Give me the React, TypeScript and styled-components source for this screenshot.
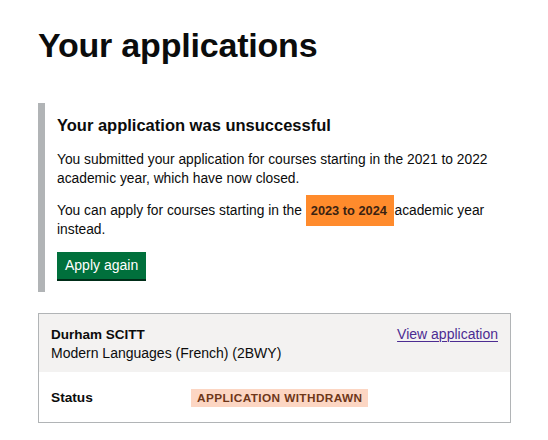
import React from "react";
import styled, { createGlobalStyle } from "styled-components";

const GlobalStyle = createGlobalStyle`
  html, body {
    margin: 0;
    padding: 0;
    background: #ffffff;
  }
  body {
    font-family: "Liberation Sans", Arial, sans-serif;
    color: #0b0c0c;
    -webkit-font-smoothing: antialiased;
  }
`;

const Page = styled.main`
  padding: 26px 37px 20px 38px;
  width: 473px;
`;

const PageHeading = styled.h1`
  margin: 0 0 39px;
  font-size: 34px;
  line-height: 38px;
  font-weight: 700;
  letter-spacing: -0.2px;
`;

const Inset = styled.div`
  border-left: 7px solid #b1b4b6;
  padding: 11px 12px 13px 12px;
  margin-bottom: 21px;
`;

const InsetHeading = styled.h2`
  margin: 0 0 13px;
  font-size: 16.5px;
  line-height: 22.5px;
  font-weight: 700;
`;

const Body = styled.p`
  margin: 0 0 13px;
  font-size: 13.8px;
  line-height: 19px;
`;

const Highlight = styled.mark`
  background: #ff8b2c;
  color: #3a2212;
  font-weight: 700;
  font-size: 12.8px;
  padding: 8px 4px 8px 5px;
`;

const Button = styled.button`
  display: inline-block;
  margin: 0;
  border: 0;
  border-radius: 0;
  background: #00703c;
  color: #ffffff;
  font-family: inherit;
  font-size: 14px;
  line-height: 19px;
  padding: 4px 8px 4px 8px;
  box-shadow: 0 2px 0 #002d18;
  cursor: pointer;
`;

const Card = styled.section`
  border: 1px solid #b1b4b6;
`;

const CardHeader = styled.div`
  background: #f3f2f1;
  padding: 11px 12px 9px;
  display: flex;
  justify-content: space-between;
  align-items: flex-start;
`;

const CardTitle = styled.div`
  font-size: 14px;
  line-height: 19px;
`;

const Provider = styled.div`
  font-weight: 700;
  font-size: 13.5px;
`;

const CardLink = styled.a`
  font-size: 14px;
  line-height: 19px;
  color: #4c2c92;
  text-decoration: underline;
  text-decoration-thickness: 1px;
  text-underline-offset: 2px;
`;

const SummaryRow = styled.dl`
  margin: 0;
  padding: 16px 12px 15px;
  display: grid;
  grid-template-columns: 140px 1fr;
  align-items: center;
`;

const Key = styled.dt`
  font-weight: 700;
  font-size: 13.7px;
  line-height: 19px;
`;

const Value = styled.dd`
  margin: 0;
  line-height: 19px;
`;

const Tag = styled.strong`
  display: inline-block;
  vertical-align: middle;
  background: #fcd6c3;
  color: #6e3619;
  font-weight: 700;
  font-size: 11.8px;
  line-height: 12px;
  letter-spacing: 0.4px;
  text-transform: uppercase;
  padding: 3px 6px 3px 6px;
`;

export default function App() {
  return (
    <>
      <GlobalStyle />
      <Page>
        <PageHeading>Your applications</PageHeading>
        <Inset>
          <InsetHeading>Your application was unsuccessful</InsetHeading>
          <Body>
            You submitted your application for courses starting in the 2021 to 2022
            academic year, which have now closed.
          </Body>
          <Body>
            You can apply for courses starting in the{" "}
            <Highlight>2023 to 2024 </Highlight>academic year instead.
          </Body>
          <Button type="button">Apply again</Button>
        </Inset>
        <Card>
          <CardHeader>
            <CardTitle>
              <Provider>Durham SCITT</Provider>
              <div>Modern Languages (French) (2BWY)</div>
            </CardTitle>
            <CardLink href="#view">View application</CardLink>
          </CardHeader>
          <SummaryRow>
            <Key>Status</Key>
            <Value>
              <Tag>Application withdrawn</Tag>
            </Value>
          </SummaryRow>
        </Card>
      </Page>
    </>
  );
}
